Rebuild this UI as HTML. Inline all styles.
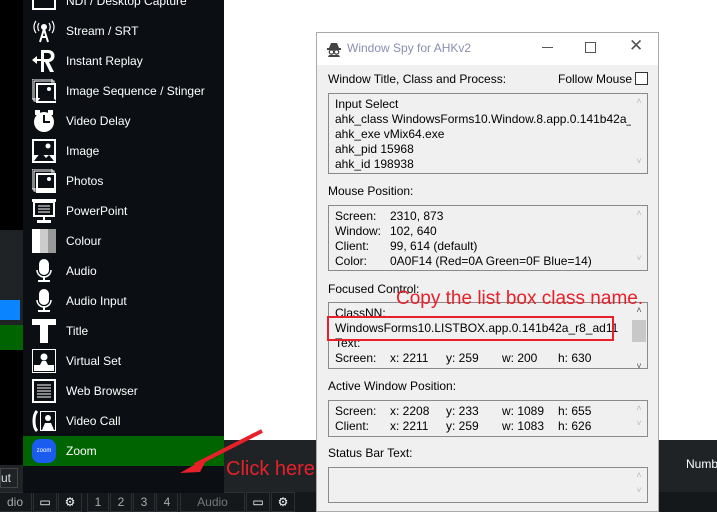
<!DOCTYPE html>
<html><head><style>
*{margin:0;padding:0;box-sizing:border-box}
body{width:717px;height:512px;overflow:hidden;background:#fff;position:relative;font-family:"Liberation Sans",sans-serif}
.a{position:absolute}
.menu{left:23px;top:0;width:201px;height:493px;background:#0b0f13}
.it{position:absolute;left:0;width:201px;height:30px;color:#fff;font-size:12px;line-height:30px;padding-left:43px}
.ic{position:absolute;left:9px;top:3px;width:24px;height:24px}
.win{left:316px;top:32px;width:343px;height:480px;background:#f0f0f0;border:1px solid #aaa;font-family:"Liberation Sans",sans-serif;font-size:12px;color:#000}
.lab{position:absolute;left:11px;font-size:12px}
.box{position:absolute;left:11px;width:320px;background:#f0f0f0;border:1px solid #8a8a8a;font-size:12px;line-height:15px;padding:3px 6px}
.sb{position:absolute;right:0;top:0;bottom:0;width:16px;background:#f0f0f0;color:#bbb;font-size:9px;text-align:center}
.bt{position:absolute;top:492px;height:20px;border:1px solid #2c3035;color:#aaa;font-size:12px;text-align:center;line-height:18px;background:#15181b}
.r{position:relative;height:15px;white-space:nowrap}
.r span{position:absolute;top:0}
</style></head><body>
<div class="a" style="left:0;top:0;width:23px;height:230px;background:#000"></div>
<div class="a" style="left:0;top:230px;width:23px;height:120px;background:#202326"></div>
<div class="a" style="left:0;top:300px;width:20px;height:20px;background:#0a84ff"></div>
<div class="a" style="left:0;top:325px;width:23px;height:25px;background:#006400"></div>
<div class="a" style="left:0;top:350px;width:23px;height:115px;background:#000"></div>
<div class="a" style="left:0;top:465px;width:23px;height:47px;background:#202326"></div>
<div class="a" style="left:0;top:468px;width:18px;height:20px;border:1px solid #444;color:#ddd;font-size:12px;line-height:18px">ut</div>
<div class="a" style="left:224px;top:440px;width:493px;height:52px;background:#202326"></div>
<div class="a" style="left:0;top:492px;width:717px;height:20px;background:#15181b"></div>
<div class="a" style="left:686px;top:457px;color:#fff;font-size:12px">Numbe</div>
<div class="bt" style="left:-2px;width:34px">dio</div>
<div class="bt" style="left:33px;width:24px;color:#fff">▭</div>
<div class="bt" style="left:58px;width:24px;color:#fff">⚙</div>
<div class="bt" style="left:87px;width:22px">1</div>
<div class="bt" style="left:110px;width:22px">2</div>
<div class="bt" style="left:133px;width:22px">3</div>
<div class="bt" style="left:156px;width:22px">4</div>
<div class="bt" style="left:180px;width:65px;color:#777">Audio</div>
<div class="bt" style="left:246px;width:24px;color:#fff">▭</div>
<div class="bt" style="left:271px;width:24px;color:#fff">⚙</div>

<div class="a menu">
<div class="it" style="top:-14px"><div class="ic" style="border:2px solid #fff;height:18px;top:6px"></div>NDI / Desktop Capture</div>
<div class="it" style="top:16px"><svg class="ic" viewBox="0 0 24 24" fill="none" stroke="#fff" stroke-width="2"><path d="M12 10L8 23M12 10l4 13M9 18h6"/><circle cx="12" cy="8" r="2" fill="#fff"/><path d="M7 4a7 7 0 0 0 0 8M17 4a7 7 0 0 1 0 8M4 2a10 10 0 0 0 0 12M20 2a10 10 0 0 1 0 12" stroke-width="1.2"/></svg>Stream / SRT</div>
<div class="it" style="top:46px"><svg class="ic" viewBox="0 0 24 24" fill="#fff"><path d="M9 1h7a6 6 0 0 1 1 12l5 10h-4l-5-10h-1v10H9zM12 4v6h4a3 3 0 0 0 0-6z" fill-rule="evenodd"/><path d="M0 11l5-4v3h4v2H5v3z"/></svg>Instant Replay</div>
<div class="it" style="top:76px"><svg class="ic" viewBox="0 0 24 24"><rect x="0" y="0" width="20" height="20" fill="none" stroke="#fff"/><rect x="2" y="2" width="20" height="20" fill="none" stroke="#fff"/><rect x="4" y="4" width="20" height="20" fill="#fff"/><rect x="6" y="6" width="16" height="13" fill="#0b0f13"/><path d="M6 22l6-8 4 5 3-3 5 6z" fill="#0b0f13"/><circle cx="17" cy="10" r="2" fill="#fff"/></svg>Image Sequence / Stinger</div>
<div class="it" style="top:106px"><svg class="ic" viewBox="0 0 24 24"><circle cx="12" cy="13" r="10" fill="#fff"/><rect x="3" y="1" width="5" height="5" fill="#fff"/><rect x="16" y="1" width="5" height="5" fill="#fff"/><path d="M12 6v7h6" stroke="#0b0f13" stroke-width="2" fill="none"/></svg>Video Delay</div>
<div class="it" style="top:136px"><svg class="ic" viewBox="0 0 24 24"><rect x="0" y="0" width="24" height="24" fill="#fff"/><rect x="2" y="2" width="20" height="14" fill="#0b0f13"/><path d="M2 22l7-9 5 6 3-3 5 6z" fill="#0b0f13"/><circle cx="16" cy="7" r="2.5" fill="#fff"/></svg>Image</div>
<div class="it" style="top:166px"><svg class="ic" viewBox="0 0 24 24"><rect x="0" y="0" width="20" height="20" fill="none" stroke="#fff"/><rect x="2" y="2" width="20" height="20" fill="none" stroke="#fff"/><rect x="4" y="4" width="20" height="20" fill="#fff"/><rect x="6" y="6" width="16" height="13" fill="#0b0f13"/><circle cx="17" cy="10" r="2" fill="#fff"/></svg>Photos</div>
<div class="it" style="top:196px"><svg class="ic" viewBox="0 0 24 24" fill="#fff"><rect x="0" y="0" width="24" height="3"/><rect x="2" y="3" width="20" height="14" fill="none" stroke="#fff" stroke-width="2"/><path d="M6 7h12M6 10h12M6 13h12" stroke="#fff"/><rect x="11" y="17" width="2" height="5"/><rect x="5" y="21" width="14" height="3"/></svg>PowerPoint</div>
<div class="it" style="top:226px"><div class="ic" style="background:linear-gradient(90deg,#fff 33%,#ccc 33%,#ccc 66%,#999 66%)"></div>Colour</div>
<div class="it" style="top:256px"><svg class="ic" viewBox="0 0 24 24" fill="#fff"><rect x="7" y="0" width="10" height="16" rx="5"/><path d="M5 11a7 7 0 0 0 14 0" fill="none" stroke="#fff" stroke-width="1.5"/><rect x="11" y="17" width="2" height="4"/><rect x="6" y="21" width="12" height="2"/></svg>Audio</div>
<div class="it" style="top:286px"><svg class="ic" viewBox="0 0 24 24" fill="#fff"><rect x="7" y="0" width="10" height="16" rx="5"/><path d="M5 11a7 7 0 0 0 14 0" fill="none" stroke="#fff" stroke-width="1.5"/><rect x="11" y="17" width="2" height="4"/><rect x="6" y="21" width="12" height="2"/></svg>Audio Input</div>
<div class="it" style="top:316px"><svg class="ic" viewBox="0 0 24 24" fill="#fff"><rect x="0" y="0" width="24" height="6"/><rect x="8" y="0" width="8" height="24"/></svg>Title</div>
<div class="it" style="top:346px"><svg class="ic" viewBox="0 0 24 24"><rect x="0.5" y="0.5" width="23" height="23" fill="none" stroke="#fff"/><circle cx="12" cy="8" r="3.5" fill="#fff"/><path d="M2 22v-6h6l2-4h4l2 4h6v6z" fill="#fff"/></svg>Virtual Set</div>
<div class="it" style="top:376px"><svg class="ic" viewBox="0 0 24 24"><rect x="1" y="1" width="22" height="22" fill="none" stroke="#fff" stroke-width="2"/><path d="M5 6h14M5 9h14M5 12h14M5 15h14M5 18h14" stroke="#fff"/></svg>Web Browser</div>
<div class="it" style="top:406px"><svg class="ic" viewBox="0 0 24 24"><path d="M5 2C1 6 1 18 5 22" stroke="#fff" stroke-width="3" fill="none"/><rect x="8.5" y="2.5" width="15" height="19" fill="none" stroke="#fff"/><circle cx="16" cy="9" r="3" fill="#fff"/><path d="M10 21l3-7h6l3 7z" fill="#fff"/></svg>Video Call</div>
<div class="it" style="top:436px;background:#006400"><div class="ic" style="background:#1a5cf0;border-radius:8px;color:#fff;font-size:6px;line-height:24px;text-align:center">zoom</div>Zoom</div>
</div>

<svg class="a" style="left:170px;top:425px" width="100" height="55"><path d="M92 6L25 40" stroke="#e8202a" stroke-width="4"/><path d="M10 48L38 32L30 47z" fill="#e8202a"/></svg>
<div class="a" style="left:226px;top:458px;color:#e8202a;font-size:20px">Click here</div>

<div class="a win">
<div class="a" style="left:0;top:0;width:341px;height:32px;background:#fff"></div>
<svg class="a" style="left:9px;top:8px" width="16" height="16" viewBox="0 0 16 16"><path d="M3 7l2-5h6l2 5z" fill="#444"/><rect x="1" y="7" width="14" height="2" fill="#444"/><circle cx="5.5" cy="11" r="2.2" fill="none" stroke="#444" stroke-width="1.3"/><circle cx="10.5" cy="11" r="2.2" fill="none" stroke="#444" stroke-width="1.3"/><path d="M3 14l-1 2h12l-1-2" fill="#444"/></svg>
<div class="a" style="left:30px;top:8px;color:#8a8fb0;font-size:12px">Window Spy for AHKv2</div>
<div class="a" style="left:225px;top:14px;width:11px;height:1px;background:#555"></div>
<div class="a" style="left:268px;top:9px;width:11px;height:11px;border:1px solid #555"></div>
<div class="a" style="left:312px;top:3px;font-size:17px;color:#555">✕</div>
<div class="lab" style="top:39px">Window Title, Class and Process:</div>
<div class="lab" style="left:241px;top:39px">Follow Mouse</div>
<div class="a" style="left:318px;top:39px;width:13px;height:13px;border:1px solid #333;background:#fff"></div>
<div class="box" style="top:60px;height:81px;overflow:hidden;white-space:nowrap;padding-right:20px">Input Select<br>ahk_class WindowsForms10.Window.8.app.0.141b42a_r8<br>ahk_exe vMix64.exe<br>ahk_pid 15968<br>ahk_id 198938<div class="sb">˄<br><br><br><br>˅</div></div>
<div class="lab" style="top:151px">Mouse Position:</div>
<div class="box" style="top:172px;height:66px">
<div class="r"><span>Screen:</span><span style="left:55px">2310, 873</span></div>
<div class="r"><span>Window:</span><span style="left:55px">102, 640</span></div>
<div class="r"><span>Client:</span><span style="left:55px">99, 614 (default)</span></div>
<div class="r"><span>Color:</span><span style="left:55px">0A0F14 (Red=0A Green=0F Blue=14)</span></div>
<div class="sb">˄<br><br><br>˅</div></div>
<div class="lab" style="top:249px">Focused Control:</div>
<div class="box" style="top:269px;height:67px;overflow:hidden">ClassNN:<br>WindowsForms10.LISTBOX.app.0.141b42a_r8_ad11<br>Text:
<div class="r"><span>Screen:</span><span style="left:55px">x: 2211</span><span style="left:111px">y: 259</span><span style="left:167px">w: 200</span><span style="left:223px">h: 630</span></div>
<div class="sb" style="color:#555">˄<div style="background:#c8c8c8;height:22px;margin:2px 1px"></div><br>˅</div></div>
<div class="a" style="left:10px;top:283px;width:287px;height:25px;border:2px solid #e8202a"></div>
<div class="a" style="left:79px;top:255px;color:#e8202a;font-size:19px;white-space:nowrap">Copy the list box class name.</div>
<div class="lab" style="top:346px">Active Window Position:</div>
<div class="box" style="top:367px;height:37px">
<div class="r"><span>Screen:</span><span style="left:55px">x: 2208</span><span style="left:111px">y: 233</span><span style="left:167px">w: 1089</span><span style="left:223px">h: 655</span></div>
<div class="r"><span>Client:</span><span style="left:55px">x: 2211</span><span style="left:111px">y: 259</span><span style="left:167px">w: 1083</span><span style="left:223px">h: 626</span></div>
<div class="sb">˄<br>˅</div></div>
<div class="lab" style="top:413px">Status Bar Text:</div>
<div class="box" style="top:434px;height:36px"><div class="sb">˄<br>˅</div></div>
</div>
</body></html>
